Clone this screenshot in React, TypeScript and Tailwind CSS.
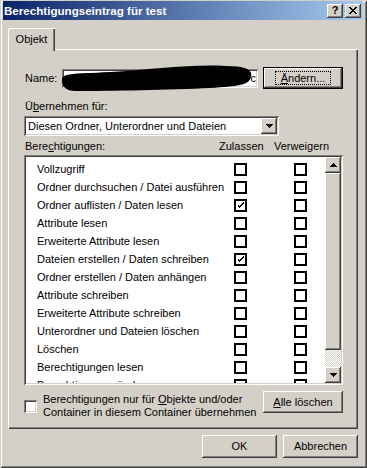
import React from "react";

const raised =
  "shadow-[inset_-1px_-1px_#404040,inset_1px_1px_#ffffff,inset_-2px_-2px_#808080,inset_2px_2px_#d4d0c8]";
const sunken =
  "shadow-[inset_1px_1px_#808080,inset_-1px_-1px_#ffffff,inset_2px_2px_#404040,inset_-2px_-2px_#d4d0c8]";

const rows: { label: string; allow: boolean }[] = [
  { label: "Vollzugriff", allow: false },
  { label: "Ordner durchsuchen / Datei ausführen", allow: false },
  { label: "Ordner auflisten / Daten lesen", allow: true },
  { label: "Attribute lesen", allow: false },
  { label: "Erweiterte Attribute lesen", allow: false },
  { label: "Dateien erstellen / Daten schreiben", allow: true },
  { label: "Ordner erstellen / Daten anhängen", allow: false },
  { label: "Attribute schreiben", allow: false },
  { label: "Erweiterte Attribute schreiben", allow: false },
  { label: "Unterordner und Dateien löschen", allow: false },
  { label: "Löschen", allow: false },
  { label: "Berechtigungen lesen", allow: false },
  { label: "Berechtigungen ändern", allow: false },
];

function Box({ checked }: { checked: boolean }) {
  return (
    <div className="flex h-[13px] w-[13px] items-center justify-center border-2 border-black bg-white">
      {checked && (
        <svg width="7" height="7" viewBox="0 0 7 7" shapeRendering="crispEdges">
          <path d="M0 2h1v3h1v1h1v-1h1v-1h1v-1h1v-1h1v-2h-1v1h-1v1h-1v1h-1v1h-1v-1h-1v-1h-1z" fill="#000" />
        </svg>
      )}
    </div>
  );
}

function Arrow({ down }: { down?: boolean }) {
  return (
    <svg width="7" height="4" viewBox="0 0 7 4" shapeRendering="crispEdges">
      <path d={down ? "M0 0h7l-3.5 4z" : "M0 4h7l-3.5-4z"} fill="#000" />
    </svg>
  );
}

function Button({ children, className = "" }: { children: React.ReactNode; className?: string }) {
  return (
    <div className={`flex items-center justify-center bg-[#d4d0c8] ${raised} ${className}`}>
      {children}
    </div>
  );
}

export default function App() {
  return (
    <div className="h-[468px] w-[367px] overflow-hidden bg-[#d4d0c8] pl-[3px] pr-[4px] pt-[1px] font-['Liberation_Sans',Arial,sans-serif] text-[11px] leading-[13px] text-black shadow-[inset_1px_1px_#d4d0c8,inset_-1px_-1px_#404040,inset_2px_2px_#ffffff,inset_-2px_-2px_#808080]">
      {/* title bar */}
      <div className="flex h-[19px] items-center justify-between bg-[linear-gradient(to_right,#0a246a,#a6caf0)] pl-[1px] pr-[2px]">
        <span className="text-[11.6px] font-bold text-white">Berechtigungseintrag für test</span>
        <div className="flex gap-[2px]">
          <Button className="h-[14px] w-[16px]">
            <span className="text-[11px] font-bold leading-none">?</span>
          </Button>
          <Button className="h-[14px] w-[16px]">
            <svg width="8" height="7" viewBox="0 0 8 7" shapeRendering="crispEdges">
              <path d="M0 0h2l2 2.5 2-2.5h2l-3 3.5 3 3.5h-2l-2-2.5-2 2.5h-2l3-3.5z" fill="#000" />
            </svg>
          </Button>
        </div>
      </div>

      <div className="mx-[5px] mt-[8px]">
        {/* tab strip */}
        <div className="flex h-[21px]">
          <div className="relative z-10 -mb-[2px] flex h-[23px] w-[47px] items-start justify-center rounded-tl-[2px] bg-[#d4d0c8] pt-[5px] shadow-[inset_1px_1px_#ffffff,inset_-1px_0_#404040,inset_-2px_0_#808080]">
            Objekt
          </div>
        </div>

        {/* panel */}
        <div className="flex h-[380px] flex-col pl-[16px] pr-[15px] pt-[18px] shadow-[inset_1px_1px_#ffffff,inset_-1px_-1px_#404040,inset_-2px_-2px_#808080]">
          <div className="flex h-[22px] items-center">
            <span className="w-[38px] pl-[1px]">Name:</span>
            <div className={`relative h-[19px] w-[196px] bg-white ${sunken}`}>
              <span className="absolute right-[2px] top-[3px]">c</span>
              <svg className="absolute -left-[1px] -top-[4px]" width="196" height="27" viewBox="61 65 196 27">
                <path
                  d="M62 80 C62 73 72 74 110 72 C150 70 190 64 226 66 C246 66 253 70 251 77 C249 85 240 86 210 88 C170 90 110 91 76 91 C65 91 62 86 62 80 Z"
                  fill="#000"
                />
              </svg>
            </div>
            <div className="ml-[5px] h-[22px] w-[80px] border border-black">
              <Button className="h-full w-full">
                <span className="border border-dotted border-black px-[5px] leading-[12px]">
                  <u>Ä</u>ndern...
                </span>
              </Button>
            </div>
          </div>

          <div className="mt-[11px] pl-[1px]">
            Ü<u>b</u>ernehmen für:
          </div>

          <div className={`mt-[3px] flex h-[20px] w-[255px] items-center bg-white pl-[4px] pr-[2px] ${sunken}`}>
            <span className="flex-1">Diesen Ordner, Unterordner und Dateien</span>
            <Button className="h-[16px] w-[16px]">
              <Arrow down />
            </Button>
          </div>

          <div className="mt-[4px] flex h-[13px]">
            <span className="w-[195px] pl-[1px]">
              Bere<u>c</u>htigungen:
            </span>
            <span className="w-[55px]">Zulassen</span>
            <span>Verweigern</span>
          </div>

          <div className={`mt-[2px] flex h-[230px] w-[319px] bg-white p-[2px] ${sunken}`}>
            <div className="flex-1 overflow-hidden pl-[11px] pt-[3px]">
              {rows.map((r) => (
                <div key={r.label} className="flex h-[18px] items-center">
                  <span className="w-[197px] whitespace-nowrap">{r.label}</span>
                  <Box checked={r.allow} />
                  <div className="ml-[47px]">
                    <Box checked={false} />
                  </div>
                </div>
              ))}
            </div>
            <div className="flex w-[16px] flex-col">
              <Button className="h-[16px] w-[16px]">
                <Arrow />
              </Button>
              <div className={`h-[177px] w-[16px] bg-[#d4d0c8] ${raised}`} />
              <div className="flex-1 bg-[repeating-conic-gradient(#ffffff_0_25%,#d4d0c8_0_50%)] bg-[length:2px_2px]" />
              <Button className="h-[16px] w-[16px]">
                <Arrow down />
              </Button>
            </div>
          </div>

          <div className="mt-[6px] flex items-start justify-between">
            <div className="mt-[9px] flex items-start">
              <div className={`h-[13px] w-[13px] bg-white ${sunken}`} />
              <div className="-mt-[7px] ml-[6px] leading-[13px]">
                Berechtigungen nur für <u>O</u>bjekte und/oder
                <br />
                Container in diesem Container übernehmen
              </div>
            </div>
            <Button className="h-[22px] w-[80px]">
              <span>
                <u>A</u>lle löschen
              </span>
            </Button>
          </div>
        </div>

        {/* dialog buttons */}
        <div className="mt-[6px] flex justify-end gap-[6px]">
          <Button className="h-[23px] w-[75px]">OK</Button>
          <Button className="h-[23px] w-[75px]">Abbrechen</Button>
        </div>
      </div>
    </div>
  );
}
